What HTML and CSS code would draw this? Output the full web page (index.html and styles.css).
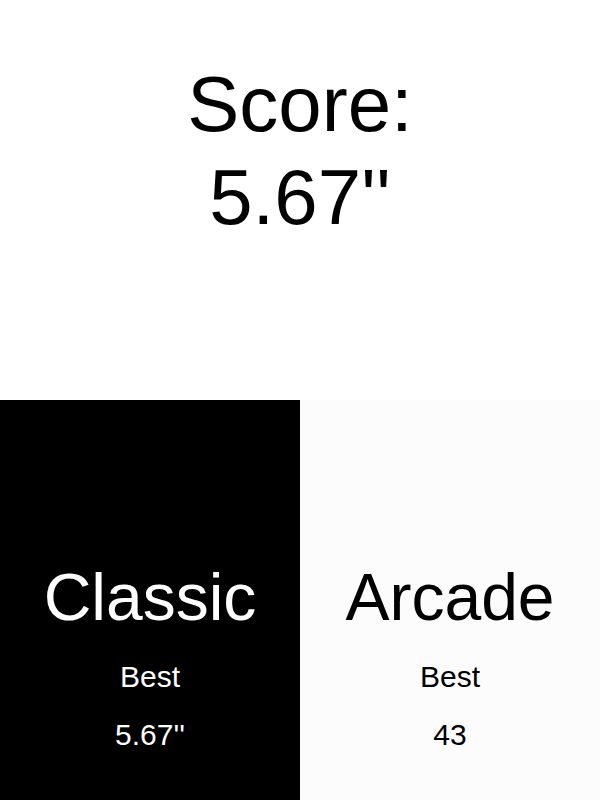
FILE: index.html
```html
<!DOCTYPE html>
<html>
<head>
<meta charset="utf-8">
<link rel="stylesheet" href="styles.css">
</head>
<body>
<div class="page">
  <section class="score">
    <div class="score-text">Score:<br>5.67''</div>
  </section>
  <section class="modes">
    <div class="mode mode-classic">
      <div class="mode-title">Classic</div>
      <div class="mode-label">Best</div>
      <div class="mode-value">5.67''</div>
    </div>
    <div class="mode mode-arcade">
      <div class="mode-title">Arcade</div>
      <div class="mode-label">Best</div>
      <div class="mode-value">43</div>
    </div>
  </section>
</div>
</body>
</html>
```
FILE: styles.css
```css
html, body {
  margin: 0;
  padding: 0;
  background: #ffffff;
}
body {
  font-family: "Liberation Sans", Arial, sans-serif;
}
.page {
  width: 600px;
  height: 800px;
  display: flex;
  flex-direction: column;
}
.score {
  height: 400px;
  box-sizing: border-box;
  padding-top: 58px;
  text-align: center;
  color: #000;
}
.score-text {
  font-size: 78px;
  line-height: 93px;
}
.modes {
  display: flex;
  height: 400px;
}
.mode {
  width: 300px;
  height: 400px;
  box-sizing: border-box;
  padding-top: 160px;
  display: flex;
  flex-direction: column;
  align-items: center;
}
.mode-classic {
  background: #000;
  color: #fff;
}
.mode-arcade {
  background: #fcfcfc;
  color: #000;
}
.mode-title {
  font-size: 66px;
  line-height: 74px;
}
.mode-label {
  font-size: 30px;
  line-height: 34px;
  margin-top: 26px;
}
.mode-value {
  font-size: 30px;
  line-height: 34px;
  margin-top: 24px;
}
```
